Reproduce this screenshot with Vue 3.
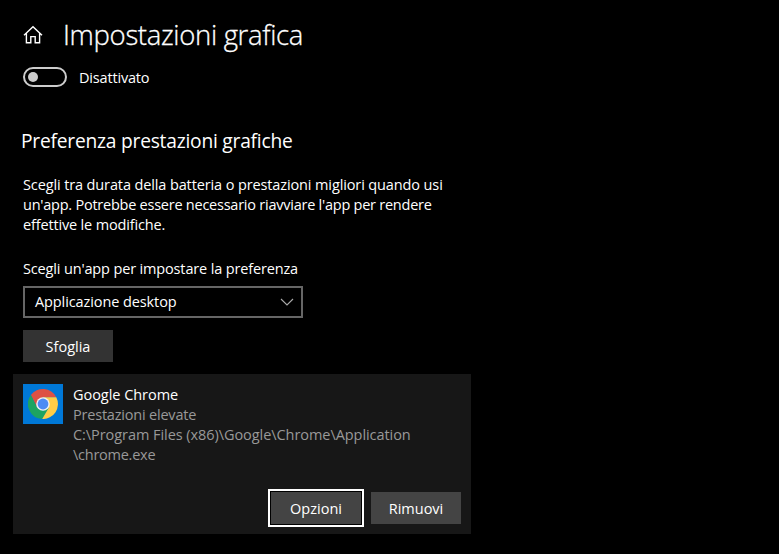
<script setup>
const description = [
  { text: 'Scegli tra durata della batteria o prestazioni migliori quando usi', tracking: -0.12 },
  { text: "un'app. Potrebbe essere necessario riavviare l'app per rendere", tracking: -0.24 },
  { text: 'effettive le modifiche.', tracking: -0.16 },
]
const details = [
  { text: 'Google Chrome', tracking: -0.04, name: true },
  { text: 'Prestazioni elevate', tracking: -0.2 },
  { text: 'C:\\Program Files (x86)\\Google\\Chrome\\Application', tracking: -0.06 },
  { text: '\\chrome.exe', tracking: -0.25 },
]
</script>

<template>
  <main class="page">
    <header class="header">
      <svg class="home" width="20" height="20" viewBox="0 0 20 20">
        <path d="M1 10.3 L10 1.7 L19 10.3 M3.4 8.4 V17.7 H7.8 V11.6 H12.2 V17.7 H16.6 V8.4" />
      </svg>
      <h1>Impostazioni grafica</h1>
    </header>

    <div class="toggle-row">
      <button class="toggle" role="switch" aria-checked="false"><i class="knob"></i></button>
      <span class="status">Disattivato</span>
    </div>

    <h2>Preferenza prestazioni grafiche</h2>
    <p class="description">
      <span
        v-for="line in description"
        :key="line.text"
        class="line"
        :style="{ letterSpacing: line.tracking + 'px' }"
      >{{ line.text }}</span>
    </p>

    <div class="label">Scegli un'app per impostare la preferenza</div>
    <div class="select" role="combobox">
      <span>Applicazione desktop</span>
      <svg width="14" height="8" viewBox="0 0 14 8"><path d="M1 1 L7 7 L13 1" /></svg>
    </div>
    <button class="button browse">Sfoglia</button>

    <section class="card">
      <div class="app">
        <div class="tile">
          <svg width="30" height="30" viewBox="0 0 30 30">
            <path fill="#dd5144" d="M2.9 6.1 A15 15 0 0 1 28.3 8.2 L15 8.2 L9.1 18.4 Z" />
            <path fill="#1da462" d="M2.9 6.1 L9.1 18.4 L15 21.8 L20.9 18.4 L14.2 30 A15 15 0 0 1 2.9 6.1 Z" />
            <path fill="#ffcd46" d="M28.3 8.2 A15 15 0 0 1 14.2 30 L20.9 18.4 L15 8.2 Z" />
            <circle cx="15" cy="15" r="6.8" fill="#f1f1f1" />
            <circle cx="15" cy="15" r="5.4" fill="#4c8bf5" />
          </svg>
        </div>
        <div class="info">
          <span
            v-for="line in details"
            :key="line.text"
            class="line"
            :class="{ name: line.name }"
            :style="{ letterSpacing: line.tracking + 'px' }"
          >{{ line.text }}</span>
        </div>
      </div>
      <div class="actions">
        <button class="button focused">Opzioni</button>
        <button class="button">Rimuovi</button>
      </div>
    </section>
  </main>
</template>

<style>
body {
  background: #000;
}
</style>

<style scoped>
.page {
  box-sizing: border-box;
  width: 779px;
  height: 554px;
  padding: 16px 0 0 23px;
  overflow: hidden;
  background: #000;
  color: #fff;
  font: 14.5px/20px "Open Sans", "Noto Sans", sans-serif;
}
.header {
  display: flex;
  align-items: center;
  height: 38px;
}
.home {
  fill: none;
  stroke: #fff;
  stroke-width: 1.4;
}
h1 {
  margin: 0 0 0 20px;
  font-size: 27.5px;
  font-weight: 300;
  line-height: 38px;
  letter-spacing: -0.33px;
  -webkit-text-stroke: 0.3px #fff;
}
.toggle-row {
  display: flex;
  align-items: center;
  gap: 12px;
  height: 20px;
  margin-top: 13px;
}
.toggle {
  display: flex;
  align-items: center;
  box-sizing: border-box;
  width: 44px;
  height: 20px;
  padding: 0 0 0 3px;
  border: 2px solid #ccc;
  border-radius: 10px;
  background: #000;
}
.knob {
  width: 10px;
  height: 10px;
  border-radius: 50%;
  background: #ccc;
}
.status {
  padding-top: 1px;
  letter-spacing: -0.18px;
}
h2 {
  margin: 40px 0 0 -2px;
  font-size: 19.2px;
  font-weight: 400;
  line-height: 28px;
  letter-spacing: -0.22px;
}
.description {
  margin: 20px 0 0;
}
.line {
  display: block;
  width: max-content;
}
.label {
  margin-top: 24px;
  letter-spacing: -0.15px;
}
.select {
  display: flex;
  align-items: center;
  justify-content: space-between;
  box-sizing: border-box;
  width: 280px;
  height: 32px;
  margin-top: 7px;
  padding: 0 7px 0 10px;
  border: 2px solid #666;
  letter-spacing: -0.1px;
}
.select svg {
  fill: none;
  stroke: #aaa;
  stroke-width: 1.1;
}
.button {
  box-sizing: border-box;
  width: 90px;
  height: 32px;
  padding: 2px 0 0;
  border: 0;
  background: #444;
  color: #fff;
  font: inherit;
}
.browse {
  display: block;
  margin-top: 12px;
  background: #333;
}
.card {
  display: flex;
  flex-direction: column;
  justify-content: space-between;
  box-sizing: border-box;
  width: 458px;
  height: 160px;
  margin: 12px 0 0 -10px;
  padding: 10px;
  background: #171717;
  color: #999;
}
.app {
  display: flex;
  gap: 10px;
}
.tile {
  display: grid;
  place-items: center;
  width: 40px;
  height: 40px;
  background: #0078d7;
}
.info {
  padding-top: 1px;
}
.name {
  color: #fff;
}
.actions {
  display: flex;
  justify-content: flex-end;
  gap: 10px;
}
.focused {
  box-shadow: 0 0 0 1px #000, 0 0 0 3px #fff;
}
</style>
